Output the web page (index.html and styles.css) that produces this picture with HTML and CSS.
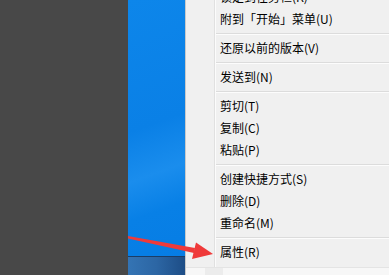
FILE: index.html
```html
<!DOCTYPE html>
<html>
<head>
    <title>右键菜单</title>
    <link rel="stylesheet" href="styles.css">
</head>
<body>
    <div class="screen">
        <div class="shade"></div>

        <div class="desktop">
            <div class="taskbar"></div>
        </div>

        <div class="menu-wrap">
            <ul class="menu">
                <li class="item">锁定到任务栏(K)</li>
                <li class="item">附到「开始」菜单(U)</li>
                <li class="sep"></li>
                <li class="item">还原以前的版本(V)</li>
                <li class="sep"></li>
                <li class="item">发送到(N)</li>
                <li class="sep"></li>
                <li class="item">剪切(T)</li>
                <li class="item">复制(C)</li>
                <li class="item">粘贴(P)</li>
                <li class="sep"></li>
                <li class="item">创建快捷方式(S)</li>
                <li class="item">删除(D)</li>
                <li class="item">重命名(M)</li>
                <li class="sep"></li>
                <li class="item">属性(R)</li>
            </ul>
            <div class="below">
                <div class="below-block"></div>
            </div>
        </div>

        <!-- red pointer drawn over the screenshot -->
        <svg class="arrow" width="389" height="275" viewBox="0 0 389 275">
            <polygon points="128,236 195,248 194,253 128,238.5" fill="#ef3a3a"/>
            <polygon points="196,242.5 213,254 192,259" fill="#ef3a3a"/>
        </svg>
    </div>
</body>
</html>
```

FILE: styles.css
```css
body {
    margin: 0;
    background-color: #f0f0f0;
    font-family: "Noto Sans CJK SC", "DejaVu Sans", sans-serif;
}

.screen {
    position: relative;
    display: flex;
    width: 389px;
    height: 275px;
    overflow: hidden;
}

.shade {
    width: 128px;
    flex-shrink: 0;
    background-color: #484848;
}

.desktop {
    width: 57px;
    flex-shrink: 0;
    display: flex;
    flex-direction: column;
    justify-content: flex-end;
    background: linear-gradient(160deg, #0d86ea 0%, #0a80e6 45%, #1a8ded 62%, #0880e6 75%, #067ce4 100%);
}

.taskbar {
    height: 18px;
    border-top: 1px solid #1b3d66;
    background: linear-gradient(to right, #3474b4 0%, #2c66a4 50%, #1d4d86 100%);
}

.menu-wrap {
    flex: 1;
    display: flex;
    flex-direction: column;
    border-left: 1px solid #c9c9c9;
}

.menu {
    list-style: none;
    margin: -14px 0 0 0;
    padding: 0 0 4px 0;
    border-bottom: 1px solid #e4e4e4;
    background-color: #f0f0f0;
    background-image: linear-gradient(to right, transparent 28px, #e0e0e0 28px, #e0e0e0 29px, #fbfbfb 29px, #fbfbfb 30px, transparent 30px);
}

.item {
    height: 22px;
    line-height: 22px;
    padding-left: 34px;
    font-size: 12px;
    color: #000;
    white-space: nowrap;
}

.sep {
    height: 0;
    margin: 3px 0 2px 30px;
    border-top: 1px solid #dcdcdc;
    border-bottom: 1px solid #fcfcfc;
}

.below {
    flex: 1;
    display: flex;
    background-color: #f7f7f7;
}

.below-block {
    width: 18px;
    margin-left: 19px;
    background-color: #ececec;
}

.arrow {
    position: absolute;
    left: 0;
    top: 0;
}
```
